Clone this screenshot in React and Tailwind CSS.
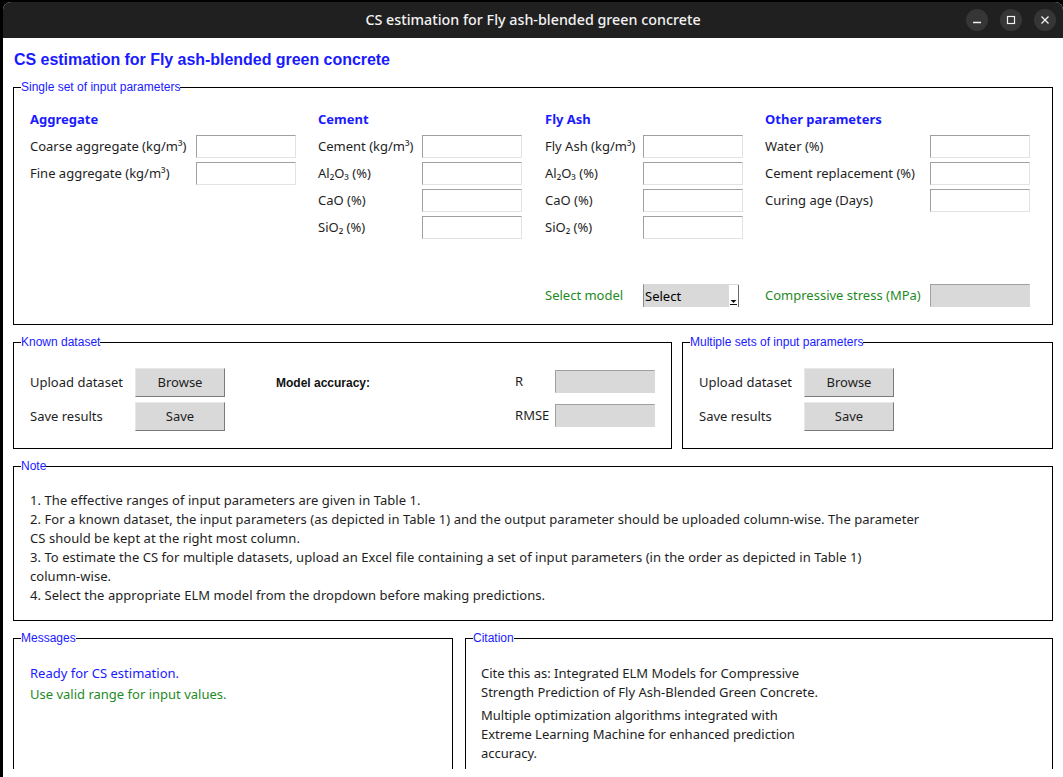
import React from 'react';

const body = { fontFamily: '"Noto Sans", "Open Sans", sans-serif' };
const tk = { fontFamily: '"Liberation Sans", Arial, sans-serif' };

function Field() {
  return (
    <div className="h-[23px] w-[100px] bg-white border border-t-[#a0a0a0] border-l-[#a0a0a0] border-r-[#e3e3e3] border-b-[#e3e3e3]" />
  );
}

function ReadField() {
  return (
    <div className="h-[23px] w-[100px] bg-[#d9d9d9] border border-t-[#a0a0a0] border-l-[#a0a0a0] border-r-[#d9d9d9] border-b-[#d9d9d9]" />
  );
}

function TkButton({ children }) {
  return (
    <button className="h-[29px] w-[90px] bg-[#d9d9d9] border border-t-[#e8e8e8] border-l-[#e8e8e8] border-r-[#7a7a7a] border-b-[#7a7a7a] text-[13px] text-[#1e1e1e]" style={body}>
      {children}
    </button>
  );
}

function Group({ label, className = '', children }) {
  return (
    <div className={`relative border border-black ${className}`}>
      <span className="absolute -top-[8px] left-[7px] bg-white text-[12px] leading-[14px] text-[#1a1aff]" style={tk}>
        {label}
      </span>
      {children}
    </div>
  );
}

function Row({ label, labelW, tall = false, children }) {
  return (
    <div className={`flex items-center ${tall ? 'h-[29px]' : 'h-[23px]'}`}>
      <span className="shrink-0 whitespace-nowrap" style={{ width: labelW }}>{label}</span>
      {children}
    </div>
  );
}

function Column({ title, labelW, rows }) {
  return (
    <div className="flex flex-col">
      <div className="h-[18px] leading-[18px] font-bold text-[#1a1aff]">{title}</div>
      <div className="mt-[7px] flex flex-col gap-[4px]">
        {rows.map(r => (
          <Row key={r} label={r} labelW={labelW}><Field /></Row>
        ))}
      </div>
    </div>
  );
}

function UploadRows() {
  return (
    <div className="flex flex-col gap-[5px]">
      <Row label="Upload dataset" labelW={105} tall><TkButton>Browse</TkButton></Row>
      <Row label="Save results" labelW={105} tall><TkButton>Save</TkButton></Row>
    </div>
  );
}

export default function App() {
  return (
    <div className="w-[1063px] h-[777px] overflow-hidden bg-black pt-[2px] pl-[3px]">
      <div className="h-full rounded-t-[8px] overflow-hidden bg-white flex flex-col">

        {/* Title bar */}
        <div className="h-[36px] shrink-0 bg-[#202020] grid grid-cols-[1fr_auto_1fr] items-center">
          <div />
          <div className="text-[14.3px] font-medium text-[#f2f2f2]" style={body}>
            CS estimation for Fly ash-blended green concrete
          </div>
          <div className="flex justify-end gap-[12px] pr-[7px]">
            <div className="w-[22px] h-[22px] rounded-full bg-[#363636] flex items-center justify-center">
              <svg width="10" height="10" viewBox="0 0 10 10"><path d="M1 7.5h8" stroke="#f0f0f0" strokeWidth="1.3" /></svg>
            </div>
            <div className="w-[22px] h-[22px] rounded-full bg-[#363636] flex items-center justify-center">
              <svg width="10" height="10" viewBox="0 0 10 10"><rect x="1.5" y="1.5" width="7" height="7" fill="none" stroke="#f0f0f0" strokeWidth="1.2" /></svg>
            </div>
            <div className="w-[22px] h-[22px] rounded-full bg-[#363636] flex items-center justify-center">
              <svg width="10" height="10" viewBox="0 0 10 10"><path d="M1.5 1.5l7 7M8.5 1.5l-7 7" stroke="#f0f0f0" strokeWidth="1.3" /></svg>
            </div>
          </div>
        </div>

        {/* Content */}
        <div className="flex-1 pl-[10px] pr-[10px] text-[13px] text-[#1e1e1e]" style={body}>
          <h1 className="mt-[12px] ml-[1px] text-[16px] leading-[20px] font-bold text-[#1a1aff] tracking-[-0.04px]" style={tk}>
            CS estimation for Fly ash-blended green concrete
          </h1>

          {/* Single set */}
          <Group label="Single set of input parameters" className="mt-[17px] w-[1040px] h-[238px]">
            <div className="pl-[16px] pt-[22px] grid grid-cols-[288px_227px_220px_1fr]">
              <Column title="Aggregate" labelW={166} rows={['Coarse aggregate (kg/m³)', 'Fine aggregate (kg/m³)']} />
              <Column title="Cement" labelW={104} rows={['Cement (kg/m³)', 'Al₂O₃ (%)', 'CaO (%)', 'SiO₂ (%)']} />
              <Column title="Fly Ash" labelW={98} rows={['Fly Ash (kg/m³)', 'Al₂O₃ (%)', 'CaO (%)', 'SiO₂ (%)']} />
              <Column title="Other parameters" labelW={165} rows={['Water (%)', 'Cement replacement (%)', 'Curing age (Days)']} />

              <div className="col-start-3 mt-[45px] text-[#1f8a1f]">
                <Row label="Select model" labelW={98}>
                  <div className="h-[23px] w-[96px] flex bg-[#d9d9d9] border-l border-t border-l-[#8a8a8a] border-t-[#d9d9d9]">
                    <span className="flex-1 pl-[1px] leading-[22px] text-black">Select</span>
                    <div className="w-[10px] bg-white border-r border-r-[#6a6a6a] flex items-end justify-center pb-[2px]">
                      <svg width="7" height="6" viewBox="0 0 7 6"><path d="M0.5 1h6L3.5 4z" fill="#111" /><path d="M0 5.5h7" stroke="#111" strokeWidth="1" /></svg>
                    </div>
                  </div>
                </Row>
              </div>
              <div className="mt-[45px] text-[#1f8a1f]">
                <Row label="Compressive stress (MPa)" labelW={165}>
                  <ReadField />
                </Row>
              </div>
            </div>
          </Group>

          {/* Known / Multiple */}
          <div className="mt-[17px] flex gap-[10px]">
            <Group label="Known dataset" className="w-[659px] h-[107px]">
              <div className="pl-[16px] pt-[25px] flex">
                <UploadRows />
                <div className="ml-[51px] h-[29px] flex items-center font-bold text-[12px] text-[#111]" style={tk}>
                  Model accuracy:
                </div>
                <div className="ml-[145px] pt-[2px] flex flex-col gap-[11px]">
                  <Row label="R" labelW={40}><ReadField /></Row>
                  <Row label="RMSE" labelW={40}><ReadField /></Row>
                </div>
              </div>
            </Group>
            <Group label="Multiple sets of input parameters" className="w-[371px] h-[107px]">
              <div className="pl-[16px] pt-[25px]">
                <UploadRows />
              </div>
            </Group>
          </div>

          {/* Note */}
          <Group label="Note" className="mt-[17px] w-[1040px] h-[155px]">
            <div className="pl-[16px] pt-[24px] leading-[19px] tracking-[0.05px]">
              <p>1. The effective ranges of input parameters are given in Table 1.</p>
              <p>2. For a known dataset, the input parameters (as depicted in Table 1) and the output parameter should be uploaded column-wise. The parameter<br />CS should be kept at the right most column.</p>
              <p>3. To estimate the CS for multiple datasets, upload an Excel file containing a set of input parameters (in the order as depicted in Table 1)<br />column-wise.</p>
              <p>4. Select the appropriate ELM model from the dropdown before making predictions.</p>
            </div>
          </Group>

          {/* Messages / Citation */}
          <div className="mt-[17px] flex gap-[12px]">
            <Group label="Messages" className="w-[440px] h-[131px] border-b-0">
              <div className="pl-[16px] pt-[24px] leading-[21px]">
                <p className="text-[#1a1aff]">Ready for CS estimation.</p>
                <p className="text-[#1f8a1f]">Use valid range for input values.</p>
              </div>
            </Group>
            <Group label="Citation" className="w-[588px] h-[131px] border-b-0">
              <div className="pl-[15px] pt-[25px] leading-[19px]">
                <p>Cite this as: Integrated ELM Models for Compressive<br />Strength Prediction of Fly Ash-Blended Green Concrete.</p>
                <p className="mt-[4px]">Multiple optimization algorithms integrated with<br />Extreme Learning Machine for enhanced prediction<br />accuracy.</p>
              </div>
            </Group>
          </div>
        </div>
      </div>
    </div>
  );
}
